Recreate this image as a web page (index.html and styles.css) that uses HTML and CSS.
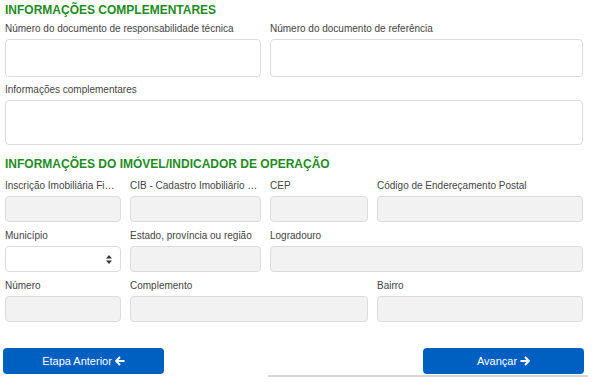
FILE: index.html
```html
<!DOCTYPE html>
<html lang="pt-BR">
<head>
  <meta charset="UTF-8" />
  <meta name="viewport" content="width=device-width, initial-scale=1.0"/>
  <title>Informações complementares</title>
  <link rel="stylesheet" href="styles.css">
</head>
<body>
  <div class="container">
    <h2 class="section-title">INFORMAÇÕES COMPLEMENTARES</h2>
    <div class="form-grid first">
      <div class="field span-2">
        <label>Número do documento de responsabilidade técnica</label>
        <input class="input tall" type="text">
      </div>
      <div class="field span-2">
        <label>Número do documento de referência</label>
        <input class="input tall" type="text">
      </div>
      <div class="field span-4">
        <label>Informações complementares</label>
        <textarea class="input area"></textarea>
      </div>
    </div>

    <h2 class="section-title second">INFORMAÇÕES DO IMÓVEL/INDICADOR DE OPERAÇÃO</h2>
    <div class="form-grid">
      <div class="field">
        <label>Inscrição Imobiliária Fiscal</label>
        <input class="input" type="text" disabled>
      </div>
      <div class="field">
        <label>CIB - Cadastro Imobiliário Brasileiro</label>
        <input class="input" type="text" disabled>
      </div>
      <div class="field">
        <label>CEP</label>
        <input class="input" type="text" disabled>
      </div>
      <div class="field">
        <label>Código de Endereçamento Postal</label>
        <input class="input" type="text" disabled>
      </div>

      <div class="field">
        <label>Município</label>
        <div class="select">
          <svg class="select-arrows" width="6" height="9" viewBox="0 0 6 9">
            <path d="M3 0 L6 3.5 H0 Z M0 5.5 H6 L3 9 Z" fill="#333"/>
          </svg>
        </div>
      </div>
      <div class="field">
        <label>Estado, província ou região</label>
        <input class="input" type="text" disabled>
      </div>
      <div class="field span-2">
        <label>Logradouro</label>
        <input class="input" type="text" disabled>
      </div>

      <div class="field">
        <label>Número</label>
        <input class="input" type="text" disabled>
      </div>
      <div class="field span-2">
        <label>Complemento</label>
        <input class="input" type="text" disabled>
      </div>
      <div class="field">
        <label>Bairro</label>
        <input class="input" type="text" disabled>
      </div>
    </div>

    <div class="actions">
      <button class="btn">Etapa Anterior
        <svg width="10" height="10" viewBox="0 0 10 10">
          <path d="M5 1 L1 5 L5 9 M1.3 5 H9.5" stroke="#fff" stroke-width="1.9" fill="none"/>
        </svg>
      </button>
      <div class="right-side">
        <button class="btn">Avançar
          <svg width="10" height="10" viewBox="0 0 10 10">
            <path d="M5 1 L9 5 L5 9 M8.7 5 H0.5" stroke="#fff" stroke-width="1.9" fill="none"/>
          </svg>
        </button>
      </div>
    </div>
  </div>
</body>
</html>
```

FILE: styles.css
```css
body {
  margin: 0;
  font-family: "Liberation Sans", Arial, sans-serif;
  background: white;
  color: #444;
}

.container {
  padding: 3px 14px 0 5px;
}

.section-title {
  margin: 0 0 4px 0;
  font-size: 12px;
  line-height: 15px;
  font-weight: bold;
  color: #1e8c1e;
}

.section-title.second {
  margin-top: 12px;
  margin-bottom: 7px;
}

.form-grid {
  display: grid;
  grid-template-columns: 116px 131px 98px 206px;
  column-gap: 9px;
  row-gap: 7px;
}

.form-grid.first {
  row-gap: 6px;
}

.span-2 { grid-column: span 2; }
.span-4 { grid-column: span 4; }

.field {
  min-width: 0;
}

.field label {
  display: block;
  font-size: 10px;
  line-height: 13px;
  margin-bottom: 4px;
  padding-right: 2px;
  white-space: nowrap;
  overflow: hidden;
  text-overflow: ellipsis;
}

.input {
  display: block;
  box-sizing: border-box;
  width: 100%;
  height: 26px;
  margin: 0;
  border: 1px solid #dcdcdc;
  border-radius: 4px;
  background: white;
  font-family: inherit;
}

.input:disabled {
  background: #f2f2f2;
}

.input.tall {
  height: 38px;
}

.input.area {
  height: 45px;
  resize: none;
}

.select {
  box-sizing: border-box;
  height: 26px;
  border: 1px solid #dcdcdc;
  border-radius: 4px;
  background: white;
  display: flex;
  align-items: center;
  justify-content: flex-end;
  padding-right: 8px;
}

.actions {
  display: flex;
  justify-content: space-between;
  margin: 26px 0 0 -2px;
}

.right-side {
  width: 316px;
  display: flex;
  justify-content: flex-end;
  padding-bottom: 1px;
  border-bottom: 2px solid #d6d6d6;
  margin-right: -5px;
  padding-right: 4px;
}

.btn {
  width: 161px;
  height: 26px;
  border: none;
  border-radius: 4px;
  background: #0060c2;
  color: white;
  font-family: inherit;
  font-size: 11px;
  display: flex;
  align-items: center;
  justify-content: center;
  gap: 3px;
  cursor: pointer;
}
```
